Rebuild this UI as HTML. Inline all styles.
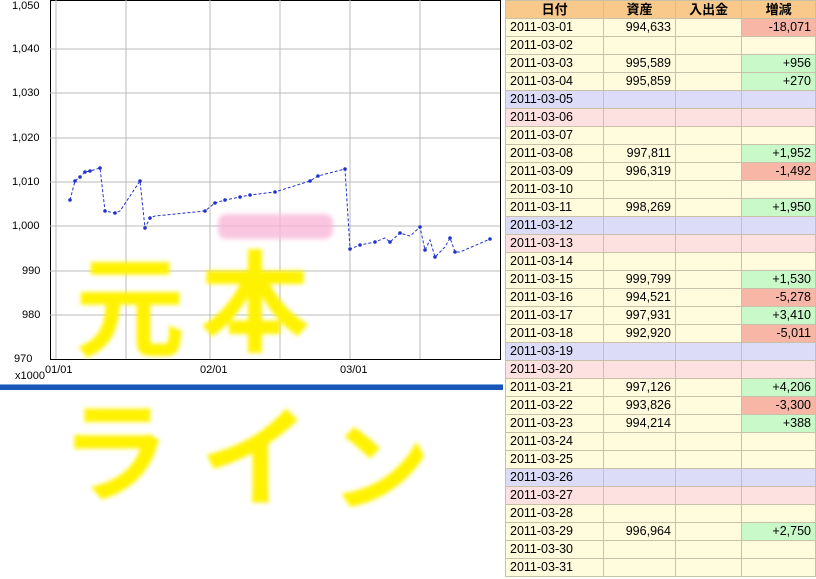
<!DOCTYPE html><html><head><meta charset="utf-8"><style>
body{margin:0;width:816px;height:579px;overflow:hidden;background:#fff;position:relative;font-family:"Liberation Sans","Noto Sans CJK JP",sans-serif}
.ax{position:absolute;font-size:11px;color:#000}
table{position:absolute;left:505px;top:0;border-collapse:collapse;font-size:12.5px}
td{height:17px;padding:0 4px;border:1px solid #c8c0a8;background:#fffbdc;line-height:17px}
td:nth-child(1){width:90px}td:nth-child(2){width:63px;text-align:right}td:nth-child(3){width:58px}td:nth-child(4){width:65px;text-align:right}
tr.h td{background:#f9c98c;font-weight:bold;text-align:center;font-size:13px}
tr.s td{background:#dcdcf8}tr.u td{background:#fde0e0}
td.n{background:#f8b6a6}td.p{background:#c9f9c9}
.y{position:absolute;color:#fff200;font-weight:bold;font-size:110px;filter:blur(2px);font-family:"Noto Sans CJK JP",sans-serif;line-height:1}
</style></head><body>
<svg width="505" height="400" style="position:absolute;left:0;top:0">
<rect x="50.5" y="0.5" width="450" height="359" fill="#fff" stroke="#000"/>
<g stroke="#bbb"><line x1="56" y1="0" x2="56" y2="359"/><line x1="126" y1="0" x2="126" y2="359"/><line x1="210" y1="0" x2="210" y2="359"/><line x1="280" y1="0" x2="280" y2="359"/><line x1="350" y1="0" x2="350" y2="359"/><line x1="420" y1="0" x2="420" y2="359"/>
<line x1="50" y1="49" x2="500" y2="49"/><line x1="50" y1="93" x2="500" y2="93"/><line x1="50" y1="138" x2="500" y2="138"/><line x1="50" y1="182" x2="500" y2="182"/><line x1="50" y1="226" x2="500" y2="226"/><line x1="50" y1="271" x2="500" y2="271"/><line x1="50" y1="315" x2="500" y2="315"/></g>
<rect x="218" y="214" width="115" height="25" rx="8" fill="#f9b8d8" opacity=".8" style="filter:blur(2px)"/>
<polyline fill="none" stroke="#2233cc" stroke-width="1" stroke-dasharray="3,2" points="70,200 75,181 80,177 85,172 90,171 100,168 105,211 115,213 120,211 140,181 145,228 150,218 155,216 205,211 215,203 225,200 235,198 240,197 250,195 275,192 310,181 318,176 345,169 350,249 360,245 365,244 375,242 385,238 390,242 400,233 410,236 420,227 425,250 430,240 435,257 445,247 450,238 455,252 460,252 490,239"/>
<g fill="#2233cc"><circle cx="70" cy="200" r="1.8"/><circle cx="75" cy="181" r="1.8"/><circle cx="80" cy="177" r="1.8"/><circle cx="85" cy="172" r="1.8"/><circle cx="90" cy="171" r="1.8"/><circle cx="100" cy="168" r="1.8"/><circle cx="105" cy="211" r="1.8"/><circle cx="115" cy="213" r="1.8"/><circle cx="140" cy="181" r="1.8"/><circle cx="145" cy="228" r="1.8"/><circle cx="150" cy="218" r="1.8"/><circle cx="205" cy="211" r="1.8"/><circle cx="215" cy="203" r="1.8"/><circle cx="225" cy="200" r="1.8"/><circle cx="240" cy="197" r="1.8"/><circle cx="250" cy="195" r="1.8"/><circle cx="275" cy="192" r="1.8"/><circle cx="310" cy="181" r="1.8"/><circle cx="318" cy="176" r="1.8"/><circle cx="345" cy="169" r="1.8"/><circle cx="350" cy="249" r="1.8"/><circle cx="360" cy="245" r="1.8"/><circle cx="375" cy="242" r="1.8"/><circle cx="390" cy="242" r="1.8"/><circle cx="400" cy="233" r="1.8"/><circle cx="420" cy="227" r="1.8"/><circle cx="425" cy="250" r="1.8"/><circle cx="435" cy="257" r="1.8"/><circle cx="450" cy="238" r="1.8"/><circle cx="455" cy="252" r="1.8"/><circle cx="490" cy="239" r="1.8"/></g>
<rect x="0" y="385" width="503" height="5" fill="#1a55b8"/><rect x="0" y="384" width="503" height="1" fill="#7fa8e0"/>
</svg>
<div class="ax" style="left:12px;top:0">1,050</div>
<div class="ax" style="left:12px;top:43px">1,040</div><div class="ax" style="left:12px;top:87px">1,030</div><div class="ax" style="left:12px;top:132px">1,020</div><div class="ax" style="left:12px;top:176px">1,010</div><div class="ax" style="left:12px;top:220px">1,000</div><div class="ax" style="left:22px;top:265px">990</div><div class="ax" style="left:22px;top:309px">980</div><div class="ax" style="left:14px;top:353px">970</div>
<div class="ax" style="left:15px;top:370px">x1000</div><div class="ax" style="left:45px;top:364px">01/01</div><div class="ax" style="left:200px;top:364px">02/01</div><div class="ax" style="left:340px;top:364px">03/01</div>
<div class="y" style="left:75px;top:245px">元</div><div class="y" style="left:200px;top:240px">本</div>
<div class="y" style="left:60px;top:390px">ラ</div><div class="y" style="left:200px;top:395px">イ</div><div class="y" style="left:330px;top:410px;font-size:100px">ン</div>
<table>
<tr class="h"><td>日付</td><td>資産</td><td>入出金</td><td>増減</td></tr>
<tr><td>2011-03-01</td><td>994,633</td><td></td><td class="n">-18,071</td></tr>
<tr><td>2011-03-02</td><td></td><td></td><td></td></tr>
<tr><td>2011-03-03</td><td>995,589</td><td></td><td class="p">+956</td></tr>
<tr><td>2011-03-04</td><td>995,859</td><td></td><td class="p">+270</td></tr>
<tr class="s"><td>2011-03-05</td><td></td><td></td><td></td></tr>
<tr class="u"><td>2011-03-06</td><td></td><td></td><td></td></tr>
<tr><td>2011-03-07</td><td></td><td></td><td></td></tr>
<tr><td>2011-03-08</td><td>997,811</td><td></td><td class="p">+1,952</td></tr>
<tr><td>2011-03-09</td><td>996,319</td><td></td><td class="n">-1,492</td></tr>
<tr><td>2011-03-10</td><td></td><td></td><td></td></tr>
<tr><td>2011-03-11</td><td>998,269</td><td></td><td class="p">+1,950</td></tr>
<tr class="s"><td>2011-03-12</td><td></td><td></td><td></td></tr>
<tr class="u"><td>2011-03-13</td><td></td><td></td><td></td></tr>
<tr><td>2011-03-14</td><td></td><td></td><td></td></tr>
<tr><td>2011-03-15</td><td>999,799</td><td></td><td class="p">+1,530</td></tr>
<tr><td>2011-03-16</td><td>994,521</td><td></td><td class="n">-5,278</td></tr>
<tr><td>2011-03-17</td><td>997,931</td><td></td><td class="p">+3,410</td></tr>
<tr><td>2011-03-18</td><td>992,920</td><td></td><td class="n">-5,011</td></tr>
<tr class="s"><td>2011-03-19</td><td></td><td></td><td></td></tr>
<tr class="u"><td>2011-03-20</td><td></td><td></td><td></td></tr>
<tr><td>2011-03-21</td><td>997,126</td><td></td><td class="p">+4,206</td></tr>
<tr><td>2011-03-22</td><td>993,826</td><td></td><td class="n">-3,300</td></tr>
<tr><td>2011-03-23</td><td>994,214</td><td></td><td class="p">+388</td></tr>
<tr><td>2011-03-24</td><td></td><td></td><td></td></tr>
<tr><td>2011-03-25</td><td></td><td></td><td></td></tr>
<tr class="s"><td>2011-03-26</td><td></td><td></td><td></td></tr>
<tr class="u"><td>2011-03-27</td><td></td><td></td><td></td></tr>
<tr><td>2011-03-28</td><td></td><td></td><td></td></tr>
<tr><td>2011-03-29</td><td>996,964</td><td></td><td class="p">+2,750</td></tr>
<tr><td>2011-03-30</td><td></td><td></td><td></td></tr>
<tr><td>2011-03-31</td><td></td><td></td><td></td></tr>
</table>
</body></html>
